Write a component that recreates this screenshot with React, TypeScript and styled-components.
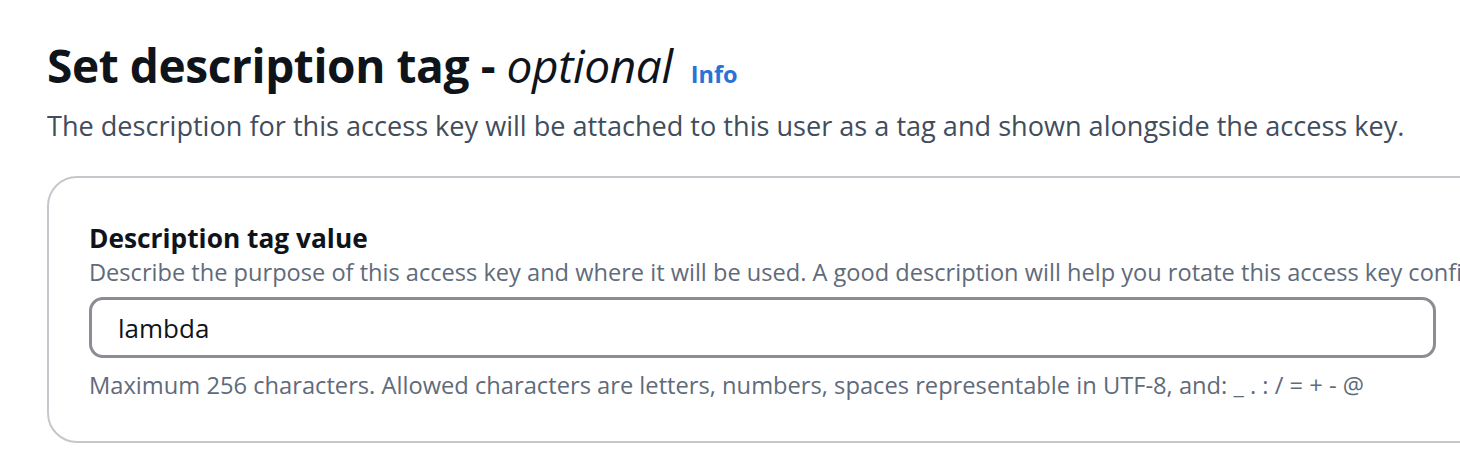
import { createGlobalStyle, styled } from 'styled-components';

const GlobalStyle = createGlobalStyle`
  html, body {
    margin: 0;
    padding: 0;
    background: #ffffff;
    overflow: hidden;
  }
  body {
    font-family: 'Open Sans', 'Noto Sans', sans-serif;
    color: #000716;
  }
`;

const Page = styled.div`
  width: 1460px;
  height: 474px;
  padding: 34px 0 0 47px;
  box-sizing: border-box;
  overflow: hidden;
`;

const Header = styled.header`
  display: flex;
  flex-direction: column;
  gap: 10px;
`;

const TitleRow = styled.div`
  display: flex;
  align-items: baseline;
  gap: 18px;
`;

const Title = styled.h2`
  margin: 0;
  font-size: 46px;
  line-height: 62px;
  font-weight: 700;
  letter-spacing: -0.4px;
  color: #0f141a;

  em {
    font-weight: 400;
    font-style: italic;
  }
`;

const InfoLink = styled.a`
  font-size: 23.5px;
  font-weight: 700;
  color: #2a72d6;
  text-decoration: none;
`;

const Description = styled.p`
  margin: 0;
  font-size: 27.1px;
  line-height: 40px;
  color: #414d5c;
`;

const Container = styled.section`
  margin-top: 30px;
  width: 1460px;
  box-sizing: border-box;
  border: 2px solid #c6c6cd;
  border-radius: 30px;
  padding: 44px 40px 39px;
`;

const Field = styled.div`
  display: flex;
  flex-direction: column;
`;

const Label = styled.label`
  font-size: 26.3px;
  line-height: 32px;
  font-weight: 700;
  color: #0f141a;
`;

const FieldDescription = styled.div`
  font-size: 23.6px;
  line-height: 36px;
  color: #5f6b7a;
  white-space: nowrap;
  overflow: hidden;
`;

const Input = styled.input`
  margin-top: 7px;
  width: 1347px;
  height: 61px;
  box-sizing: border-box;
  border: 3px solid #8c8c94;
  border-radius: 14px;
  padding: 0 26px;
  font-family: inherit;
  font-size: 26px;
  color: #0f141a;
  outline: none;
`;

const Constraint = styled.div`
  margin-top: 10px;
  font-size: 23.7px;
  line-height: 34px;
  color: #5f6b7a;
`;

export default function App() {
  return (
    <>
      <GlobalStyle />
      <Page>
        <Header>
          <TitleRow>
            <Title>
              Set description tag - <em>optional</em>
            </Title>
            <InfoLink href="#">Info</InfoLink>
          </TitleRow>
          <Description>
            The description for this access key will be attached to this user as a tag and shown alongside the access key.
          </Description>
        </Header>
        <Container>
          <Field>
            <Label htmlFor="tag">Description tag value</Label>
            <FieldDescription>
              Describe the purpose of this access key and where it will be used. A good description will help you rotate this access key confidently.
            </FieldDescription>
            <Input id="tag" defaultValue="lambda" />
            <Constraint>
              Maximum 256 characters. Allowed characters are letters, numbers, spaces representable in UTF-8, and: _ . : / = + - @
            </Constraint>
          </Field>
        </Container>
      </Page>
    </>
  );
}
